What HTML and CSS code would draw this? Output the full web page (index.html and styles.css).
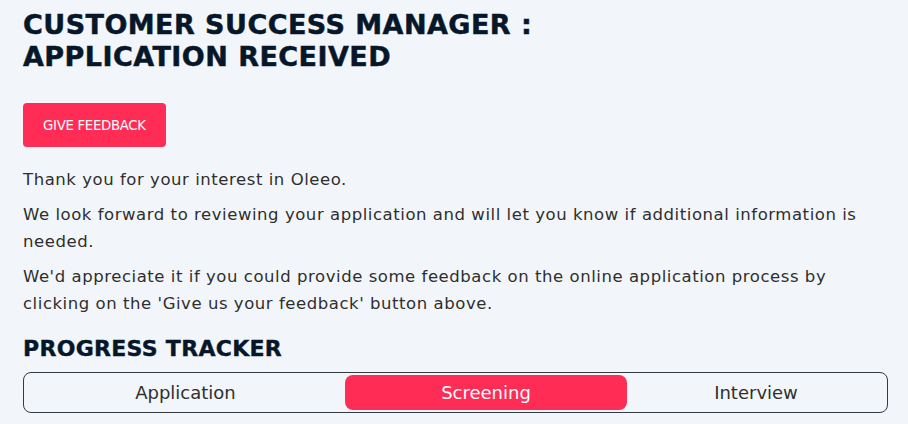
FILE: index.html
```html
<!DOCTYPE html>
<html lang="en">
<head>
<meta charset="utf-8">
<title>Application received</title>
<link rel="stylesheet" href="styles.css">
</head>
<body>
<main class="page">
  <h1 class="title">CUSTOMER SUCCESS MANAGER : APPLICATION RECEIVED</h1>
  <button class="btn" type="button">GIVE FEEDBACK</button>
  <p class="text first">Thank you for your interest in Oleeo.</p>
  <p class="text">We look forward to reviewing your application and will let you know if additional information is needed.</p>
  <p class="text">We'd appreciate it if you could provide some feedback on the online application process by clicking on the 'Give us your feedback' button above.</p>
  <h2 class="section-title">PROGRESS TRACKER</h2>
  <div class="tracker">
    <div class="step">Application</div>
    <div class="step active">Screening</div>
    <div class="step">Interview</div>
  </div>
</main>
</body>
</html>
```
FILE: styles.css
```css
html, body {
  margin: 0;
  background: #f2f6fa;
}
body {
  font-family: "DejaVu Sans", "Open Sans", sans-serif;
  color: #2e2e2e;
}
.page {
  padding: 9px 20px 0 23px;
}
.title {
  margin: 0;
  max-width: 560px;
  font-size: 27px;
  line-height: 32px;
  font-weight: 700;
  letter-spacing: 0.45px;
  color: #07172a;
  -webkit-text-stroke: 0.5px #07172a;
}
.btn {
  display: block;
  margin-top: 30px;
  height: 44px;
  padding: 0 20px;
  border: 0;
  border-radius: 4px;
  background: #ff2d55;
  color: #ffffff;
  font-family: inherit;
  font-size: 13.3px;
  letter-spacing: -0.3px;
}
.text {
  margin: 0 0 9px;
  font-size: 16.5px;
  line-height: 26.4px;
  letter-spacing: 0.55px;
}
.text.first {
  margin-top: 20px;
}
.section-title {
  margin: 19px 0 10px;
  font-size: 22px;
  line-height: 26px;
  font-weight: 700;
  letter-spacing: 0.3px;
  color: #07172a;
  -webkit-text-stroke: 0.4px #07172a;
}
.tracker {
  display: grid;
  grid-template-columns: 319fr 282fr 258fr;
  padding: 2px;
  border: 1px solid #333a40;
  border-radius: 8px;
}
.step {
  height: 35px;
  line-height: 35px;
  text-align: center;
  font-size: 18px;
  color: #2f2f2f;
  border-radius: 8px;
}
.step.active {
  background: #ff2d55;
  color: #ffffff;
}
```
